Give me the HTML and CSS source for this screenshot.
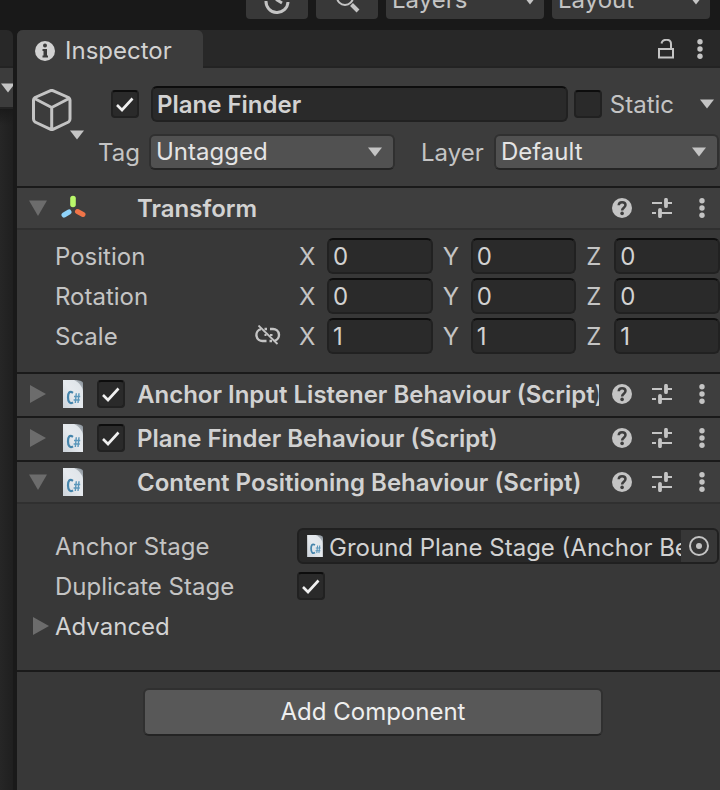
FILE: index.html
```html
<!DOCTYPE html>
<html lang="en">
<head>
<meta charset="utf-8">
<title>Inspector</title>
<link rel="stylesheet" href="styles.css">
</head>
<body>
<svg class="sprite" aria-hidden="true">
  <defs>
    <linearGradient id="paper" x1="0" y1="1" x2="1" y2="0">
      <stop offset="0" stop-color="#ccd3da"/><stop offset="0.5" stop-color="#e6eaee"/><stop offset="1" stop-color="#dde3e8"/>
    </linearGradient>
    <linearGradient id="fold" x1="0" y1="1" x2="1" y2="0">
      <stop offset="0" stop-color="#f4f6f8"/><stop offset="1" stop-color="#7d8790"/>
    </linearGradient>
  </defs>
  <symbol id="down" viewBox="0 0 16 10"><path d="M1 0.5h14L8 9.5z" fill="currentColor"/></symbol>
  <symbol id="open" viewBox="0 0 18 16"><path d="M0 0.5h18L9 16z" fill="currentColor"/></symbol>
  <symbol id="closed" viewBox="0 0 16 18"><path d="M0 0v18l16-9z" fill="currentColor"/></symbol>
  <symbol id="tick" viewBox="0 0 28 28"><path d="M6 15l5 5L21.500 8.500" fill="none" stroke="currentColor" stroke-width="2.600"/></symbol>
  <symbol id="dots" viewBox="0 0 20 20"><g fill="currentColor"><circle cx="10" cy="2.700" r="2.700"/><circle cx="10" cy="10" r="2.700"/><circle cx="10" cy="17.300" r="2.700"/></g></symbol>
  <symbol id="help" viewBox="0 0 20 20">
    <circle cx="10" cy="10" r="10" fill="currentColor"/>
    <path d="M6.700 7.300C6.800 5.200 8.200 4.200 10.100 4.200c2 0 3.400 1.100 3.400 2.900 0 2.600-3.400 2.600-3.400 5.300" fill="none" stroke="#3e3e3e" stroke-width="2.500"/>
    <circle cx="10.100" cy="15.400" r="1.800" fill="#3e3e3e"/>
  </symbol>
  <symbol id="sliders" viewBox="0 0 20 20">
    <path d="M0 5h10M14 5h6M0 15h4M8 15h12" stroke="currentColor" stroke-width="2" fill="none"/>
    <path d="M14 1.800v6.400M8 11.800v6.400" stroke="currentColor" stroke-width="3.800" stroke-linecap="round" fill="none"/>
  </symbol>
  <symbol id="script" viewBox="0 0 20 28">
    <path d="M0 0h12l8 4v24H0z" fill="url(#paper)"/>
    <path d="M11 0c5 0 9 1 9 3v9c0-4-3-9-9-12z" fill="url(#fold)"/>
    <path d="M10 12.800C6.500 10.500 5 13 5 17.300c0 4.700 2 7 5 5" fill="none" stroke="#4484ab" stroke-width="2.200"/>
    <path d="M13.300 13.300l-1 9.700M16 13.300l-1 9.700M11 16.500h6.200M10.600 20h6.200" fill="none" stroke="#5b97bb" stroke-width="1.400"/>
  </symbol>
</svg>

<header class="toolbar">
  <button class="tool" type="button" aria-label="History">
    <svg width="28" height="28" viewBox="0 0 28 28"><path d="M3 15a11 11 0 0 0 22 1M25 13V8M14 7v7l5 3" fill="none" stroke="currentColor" stroke-width="3"/></svg>
  </button>
  <button class="tool" type="button" aria-label="Search">
    <svg width="28" height="28" viewBox="0 0 28 28"><circle cx="12" cy="11" r="8" fill="none" stroke="currentColor" stroke-width="2"/><path d="M18.500 18.500l6.500 6.500" stroke="currentColor" stroke-width="4"/></svg>
  </button>
  <div class="picker picker-bar">
    <select aria-label="Layers"><option>Layers</option></select>
    <svg class="arrow"><use href="#down"/></svg>
  </div>
  <div class="picker picker-bar">
    <select aria-label="Layout"><option>Layout</option></select>
    <svg class="arrow"><use href="#down"/></svg>
  </div>
</header>

<main class="workspace">
  <aside class="neighbour">
    <div class="neighbour-tab"></div>
    <div class="neighbour-bar"><svg class="arrow"><use href="#down"/></svg></div>
    <div class="neighbour-view"></div>
  </aside>

  <section class="inspector">
    <div class="tabs">
      <h1 class="tab">
        <svg width="20" height="20" viewBox="0 0 20 20"><circle cx="10" cy="10" r="10" fill="currentColor"/><path d="M7.500 8H12v6.500h1V16.500H7.500v-2h1v-4.500h-1z" fill="#3c3c3c"/><circle cx="10" cy="4.500" r="2" fill="#3c3c3c"/></svg>
        Inspector
      </h1>
      <div class="tab-actions">
        <button class="icon" type="button" aria-label="Lock">
          <svg width="20" height="20" viewBox="0 0 20 20"><rect x="3" y="10" width="14" height="8.500" fill="none" stroke="currentColor" stroke-width="2"/><path d="M5.500 4.500C6.500-0.500 15-0.500 15 5v5" fill="none" stroke="currentColor" stroke-width="2"/></svg>
        </button>
        <button class="icon" type="button" aria-label="Inspector menu"><svg width="20" height="20"><use href="#dots"/></svg></button>
      </div>
    </div>

    <div class="object">
      <button class="cube" type="button" aria-label="Object icon">
        <svg width="40" height="42" viewBox="0 0 40 42"><path d="M18 1.800a4 4 0 0 1 3.400 0L36.500 8.500Q38 9.500 38 11v19q0 2-1.500 3L21.500 40.200a4 4 0 0 1-3.400 0L3 33q-1.500-1-1.500-3V11q0-1.500 1.500-2.500zM2.500 9.500L19.700 18.500 37 9.500M19.700 18.500V40" fill="none" stroke="currentColor" stroke-width="3" stroke-linejoin="round"/></svg>
        <svg class="arrow"><use href="#down"/></svg>
      </button>
      <div class="object-fields">
        <div class="object-name">
          <span class="check"><input type="checkbox" aria-label="Active" checked><svg><use href="#tick"/></svg></span>
          <input class="field name" type="text" aria-label="Name" value="Plane Finder">
          <label class="static"><span class="check"><input type="checkbox"><svg><use href="#tick"/></svg></span><span class="text">Static</span></label>
          <button class="static-menu" type="button" aria-label="Static options"><svg class="arrow"><use href="#down"/></svg></button>
        </div>
        <div class="object-tags">
          <label class="text" for="tag">Tag</label>
          <div class="picker"><select id="tag"><option>Untagged</option></select><svg class="arrow"><use href="#down"/></svg></div>
          <label class="text layer" for="layer">Layer</label>
          <div class="picker"><select id="layer"><option>Default</option></select><svg class="arrow"><use href="#down"/></svg></div>
        </div>
      </div>
    </div>

    <section class="component">
      <div class="component-head expanded">
        <button class="foldout" type="button" aria-label="Collapse Transform"><svg width="18" height="16"><use href="#open"/></svg></button>
        <svg class="axes" width="28" height="28" viewBox="0 0 28 28"><g fill="none" stroke-width="5" stroke-linecap="round"><path d="M12 4.500v6" stroke="#b9f76a" stroke-width="5.600"/><path d="M8 18l-5 3" stroke="#8fd3fa"/><path d="M16.500 17.500l5.500 3" stroke="#ef7448"/></g></svg>
        <span></span>
        <h2 class="text">Transform</h2>
        <div class="actions">
          <button class="icon" type="button" aria-label="Help"><svg><use href="#help"/></svg></button>
          <button class="icon" type="button" aria-label="Presets"><svg><use href="#sliders"/></svg></button>
          <button class="icon" type="button" aria-label="Menu"><svg><use href="#dots"/></svg></button>
        </div>
      </div>
      <div class="vectors">
        <div class="vector">
          <span class="vector-name"><span class="text">Position</span></span>
          <label><span class="text">X</span><input class="field" type="text" value="0"></label>
          <label><span class="text">Y</span><input class="field" type="text" value="0"></label>
          <label><span class="text">Z</span><input class="field" type="text" value="0"></label>
        </div>
        <div class="vector">
          <span class="vector-name"><span class="text">Rotation</span></span>
          <label><span class="text">X</span><input class="field" type="text" value="0"></label>
          <label><span class="text">Y</span><input class="field" type="text" value="0"></label>
          <label><span class="text">Z</span><input class="field" type="text" value="0"></label>
        </div>
        <div class="vector">
          <span class="vector-name"><span class="text">Scale</span>
            <button class="link" type="button" aria-label="Constrain proportions"><svg width="26" height="22" viewBox="0 0 26 22"><g fill="none" stroke="currentColor" stroke-width="2.400"><path d="M6 4.200a6 6 0 0 0 2 11.800h3.500M9.500 4h2.500M15 4h3a6 6 0 0 1 1.500 11.800M14.500 16h2.500"/><path d="M9.500 10h2M15 10h2.500" stroke-width="2"/><path d="M3.500 0.500l19 18.500" stroke-width="1.800"/></g></svg></button>
          </span>
          <label><span class="text">X</span><input class="field" type="text" value="1"></label>
          <label><span class="text">Y</span><input class="field" type="text" value="1"></label>
          <label><span class="text">Z</span><input class="field" type="text" value="1"></label>
        </div>
      </div>
    </section>

    <section class="component">
      <div class="component-head">
        <button class="foldout" type="button" aria-label="Expand Anchor Input Listener"><svg width="18" height="18"><use href="#closed"/></svg></button>
        <svg class="file" width="20" height="28"><use href="#script"/></svg>
        <span class="check"><input type="checkbox" aria-label="Anchor Input Listener enabled" checked><svg><use href="#tick"/></svg></span>
        <h2 class="text">Anchor Input Listener Behaviour (Script)</h2>
        <div class="actions">
          <button class="icon" type="button" aria-label="Help"><svg><use href="#help"/></svg></button>
          <button class="icon" type="button" aria-label="Presets"><svg><use href="#sliders"/></svg></button>
          <button class="icon" type="button" aria-label="Menu"><svg><use href="#dots"/></svg></button>
        </div>
      </div>
    </section>

    <section class="component">
      <div class="component-head">
        <button class="foldout" type="button" aria-label="Expand Plane Finder"><svg width="18" height="18"><use href="#closed"/></svg></button>
        <svg class="file" width="20" height="28"><use href="#script"/></svg>
        <span class="check"><input type="checkbox" aria-label="Plane Finder enabled" checked><svg><use href="#tick"/></svg></span>
        <h2 class="text">Plane Finder Behaviour (Script)</h2>
        <div class="actions">
          <button class="icon" type="button" aria-label="Help"><svg><use href="#help"/></svg></button>
          <button class="icon" type="button" aria-label="Presets"><svg><use href="#sliders"/></svg></button>
          <button class="icon" type="button" aria-label="Menu"><svg><use href="#dots"/></svg></button>
        </div>
      </div>
    </section>

    <section class="component">
      <div class="component-head expanded">
        <button class="foldout" type="button" aria-label="Collapse Content Positioning"><svg width="18" height="16"><use href="#open"/></svg></button>
        <svg class="file" width="20" height="28"><use href="#script"/></svg>
        <span></span>
        <h2 class="text">Content Positioning Behaviour (Script)</h2>
        <div class="actions">
          <button class="icon" type="button" aria-label="Help"><svg><use href="#help"/></svg></button>
          <button class="icon" type="button" aria-label="Presets"><svg><use href="#sliders"/></svg></button>
          <button class="icon" type="button" aria-label="Menu"><svg><use href="#dots"/></svg></button>
        </div>
      </div>
      <div class="properties">
        <div class="property">
          <label class="text" for="anchor">Anchor Stage</label>
          <div class="reference">
            <svg width="16" height="22" preserveAspectRatio="none"><use href="#script"/></svg>
            <input id="anchor" type="text" readonly value="Ground Plane Stage (Anchor Behaviour)">
            <button type="button" aria-label="Select object"><svg width="20" height="20" viewBox="0 0 20 20"><circle cx="10" cy="10" r="9" fill="none" stroke="currentColor" stroke-width="2"/><circle cx="10" cy="10" r="3" fill="currentColor"/></svg></button>
          </div>
        </div>
        <div class="property">
          <label class="text" for="duplicate">Duplicate Stage</label>
          <span class="check"><input id="duplicate" type="checkbox" checked><svg><use href="#tick"/></svg></span>
        </div>
        <button class="advanced" type="button"><svg width="16" height="18"><use href="#closed"/></svg><span class="text">Advanced</span></button>
      </div>
    </section>

    <footer class="add"><button type="button">Add Component</button></footer>
  </section>
</main>
</body>
</html>
```
FILE: styles.css
```css
* { box-sizing: border-box; }

body {
  margin: 0;
  min-height: 100vh;
  display: flex;
  flex-direction: column;
  background: #191919;
  color: #c4c4c4;
  font: 24px/36px Inter, "Liberation Sans", sans-serif;
}

button, input, select { font: inherit; color: inherit; margin: 0; }
button { display: grid; place-items: center; padding: 0; border: 0; background: none; }
h1, h2 { margin: 0; font: inherit; }
svg { display: block; flex: none; }
.sprite { position: absolute; width: 0; height: 0; }
.arrow { width: 16px; height: 10px; }

/* Labels sit slightly below the middle of their row */
.text { height: 36px; line-height: 38px; }

/* Toolbar: its controls run past the top edge of the window */
.toolbar {
  display: flex;
  align-items: flex-end;
  justify-content: flex-end;
  gap: 8px;
  height: 30px;
  padding: 0 10px 11px 0;
  overflow: hidden;
}
.tool { width: 62px; height: 38px; border-radius: 4px; background: #383838; }

.picker { display: grid; align-items: center; min-width: 0; }
.picker > * { grid-area: 1 / 1; }
.picker select {
  appearance: none;
  width: 100%;
  height: 36px;
  padding: 0 36px 0 5px;
  border: 2px solid #303030;
  border-bottom-color: #242424;
  border-radius: 6px;
  background: #515151;
  color: #e4e4e4;
  line-height: 30px;
}
.picker .arrow { justify-self: end; margin-right: 12px; pointer-events: none; }
.picker-bar { width: 158px; }
.picker-bar select { height: 38px; padding: 0 24px 0 6px; border: 0; border-radius: 4px; background: #383838; color: #c4c4c4; }
.picker-bar .arrow { margin-right: 6px; }

.workspace { display: flex; flex: 1; gap: 4px; }

.neighbour { display: flex; flex-direction: column; width: 13px; overflow: hidden; }
.neighbour-tab { height: 38px; border-bottom: 2px solid #232323; border-radius: 0 6px 0 0; background: #282828; }
.neighbour-bar { display: flex; align-items: center; height: 41px; border-bottom: 2px solid #232323; background: #3c3c3c; }
.neighbour-view { flex: 1; background: linear-gradient(#1a1a1a, transparent 16px), linear-gradient(90deg, #262626, #1f1f1f); }

.inspector { display: flex; flex: 1; flex-direction: column; min-width: 0; border-radius: 6px 0 0 0; background: #383838; }

.tabs {
  display: flex;
  justify-content: space-between;
  height: 38px;
  border-radius: 6px 0 0 0;
  background: linear-gradient(#282828 36px, #232323 36px);
}
.tab {
  display: flex;
  align-items: center;
  gap: 10px;
  width: 186px;
  padding: 4px 0 0 18px;
  border-radius: 6px 6px 0 0;
  background: #3c3c3c;
  color: #d2d2d2;
}
.tab-actions { display: flex; align-items: center; gap: 14px; padding-right: 10px; }

.icon { width: 20px; height: 22px; }
.icon svg { width: 20px; height: 20px; }

.object { display: flex; padding: 18px 0 16px 15px; background: #3c3c3c; }
.cube { align-content: start; justify-items: start; width: 66px; padding-top: 3px; }
.cube .arrow { margin: -1px 0 0 37px; }
.object-fields { display: grid; flex: 1; gap: 12px; min-width: 0; }
.object-name { display: flex; align-items: center; padding-left: 13px; }
.name { flex: 1; margin: 0 6px 0 12px; font-weight: 600; }
.static { display: flex; align-items: center; gap: 8px; }
.static-menu { width: 46px; height: 36px; justify-items: end; padding-right: 5px; }
.object-tags { display: grid; grid-template-columns: 51px 246fr 99px 225fr; padding-right: 1px; }
.layer { padding-left: 26px; }

.field {
  min-width: 0;
  width: 100%;
  height: 36px;
  padding: 2px 4px 0;
  border: 2px solid #212121;
  border-top-color: #0d0d0d;
  border-radius: 6px;
  background: #2a2a2a;
  color: #d2d2d2;
}

.check { display: grid; width: 28px; height: 28px; color: #f0f0f0; }
.check > * { grid-area: 1 / 1; width: 28px; height: 28px; }
.check input {
  appearance: none;
  border: 2px solid #212121;
  border-top-color: #0d0d0d;
  border-radius: 4px;
  background: #2a2a2a;
}
.check svg { visibility: hidden; pointer-events: none; }
.check input:checked + svg { visibility: visible; }

.component { border-top: 2px solid #1a1a1a; }
.component-head {
  display: grid;
  grid-template-columns: 32px 36px 40px 1fr auto;
  align-items: center;
  height: 42px;
  padding: 0 8px 2px 12px;
  background: #3e3e3e;
}
.expanded { border-bottom: 2px solid #303030; padding-bottom: 0; }
.component-head h2 { overflow: hidden; white-space: nowrap; color: #d2d2d2; font-weight: 600; }
.foldout { justify-self: start; width: 18px; color: #6c6c6c; }
.file { margin-left: 2px; }
.actions { display: flex; gap: 20px; padding-left: 13px; }

.vectors { display: grid; gap: 4px; padding: 8px 0 18px 38px; }
.vector { display: grid; grid-template-columns: 234px repeat(3, 1fr); gap: 10px; }
.vector-name { display: flex; justify-content: space-between; align-items: center; padding-right: 8px; }
.vector label { display: grid; grid-template-columns: 28px 1fr; }

.properties { display: grid; gap: 4px; padding: 24px 0 26px 38px; }
.property { display: grid; grid-template-columns: 242px minmax(0, 1fr); align-items: center; min-height: 36px; padding-right: 1px; }
.reference {
  display: flex;
  align-items: center;
  height: 36px;
  padding-left: 8px;
  border: 2px solid #202020;
  border-radius: 6px;
  background: #282828;
  color: #d2d2d2;
}
.reference input { flex: 1; min-width: 0; height: 32px; padding: 3px 0 0 6px; border: 0; background: none; }
.reference button { width: 36px; height: 32px; border-radius: 0 4px 4px 0; background: #373737; color: #c4c4c4; }
.advanced { display: flex; align-items: center; gap: 6px; margin-left: -22px; color: #d2d2d2; }
.advanced svg { color: #6c6c6c; }

.add { flex: 1; padding: 16px 0 16px 9px; border-top: 2px solid #1a1a1a; }
.add button {
  width: 460px;
  max-width: 100%;
  height: 48px;
  margin: 0 auto;
  border: 2px solid #303030;
  border-bottom-color: #242424;
  border-radius: 6px;
  background: #585858;
  color: #eee;
}
```
